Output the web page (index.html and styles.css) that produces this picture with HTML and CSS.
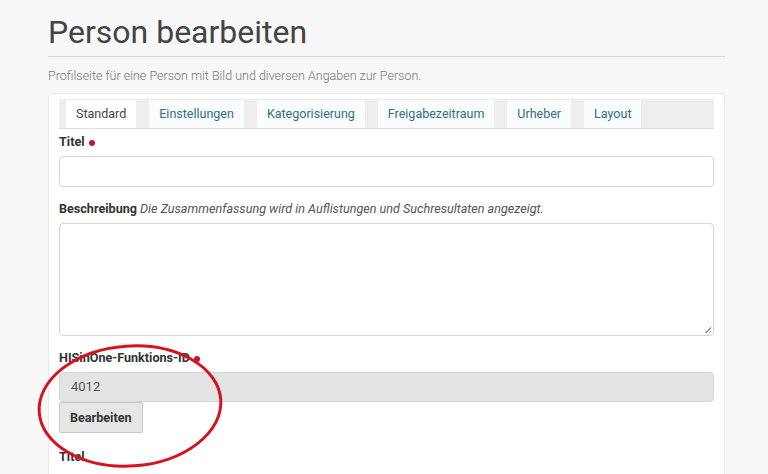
FILE: index.html
```html
<!DOCTYPE html>
<html lang="de">
<head>
<meta charset="utf-8">
<title>Person bearbeiten</title>
<link rel="stylesheet" href="styles.css">
</head>
<body>
<div class="page">
  <h1 class="title">Person bearbeiten</h1>
  <p class="lead">Profilseite für eine Person mit Bild und diversen Angaben zur Person.</p>
  <div class="card">
    <ul class="tabs">
      <li class="tab active">Standard</li>
      <li class="tab">Einstellungen</li>
      <li class="tab">Kategorisierung</li>
      <li class="tab">Freigabezeitraum</li>
      <li class="tab">Urheber</li>
      <li class="tab">Layout</li>
    </ul>
    <div class="field">
      <label class="label">Titel <span class="req"></span></label>
      <div class="input"></div>
    </div>
    <div class="field">
      <label class="label">Beschreibung <em class="hint">Die Zusammenfassung wird in Auflistungen und Suchresultaten angezeigt.</em></label>
      <div class="textarea"><span class="grip"></span></div>
    </div>
    <div class="field">
      <label class="label">HISinOne-Funktions-ID <span class="req"></span></label>
      <div class="input disabled">4012</div>
      <button class="btn">Bearbeiten</button>
    </div>
    <div class="field last">
      <label class="label">Titel</label>
    </div>
  </div>
</div>
<svg class="mark" width="768" height="474" viewBox="0 0 768 474">
  <ellipse cx="130" cy="406" rx="91" ry="60" fill="none" stroke="#d3141f" stroke-width="3" transform="rotate(-4 130 406)"/>
</svg>
</body>
</html>
```
FILE: styles.css
```css
* { box-sizing: border-box; }
html, body { margin: 0; padding: 0; }
body {
  background: #f8f8f8;
  font-family: Roboto, "Liberation Sans", Arial, sans-serif;
  color: #333;
  width: 768px;
  height: 474px;
  overflow: hidden;
  position: relative;
}
.page {
  margin-left: 48px;
  width: 677px;
  padding-top: 10px;
}
.title {
  margin: 0;
  font-size: 32px;
  font-weight: 400;
  color: #444;
  line-height: 44px;
  padding-bottom: 2px;
  border-bottom: 1px solid #dcdcdc;
}
.lead {
  margin: 10px 0 8px;
  font-size: 12.5px;
  font-weight: 300;
  color: #777;
  line-height: 18px;
}
.card {
  background: #fff;
  border: 1px solid #e8e8e8;
  border-radius: 4px;
  padding: 5px 10px 20px;
}
.tabs {
  list-style: none;
  margin: 0;
  padding: 1px 0 0 7px;
  background: #eeeeee;
  display: flex;
  gap: 13px;
  border-bottom: 1px solid #dedede;
}
.tab {
  background: #fbfcfd;
  color: #2f6f8a;
  font-size: 12.5px;
  line-height: 28px;
  padding: 0 10px;
}
.tab.active {
  background: #fff;
  color: #444;
}
.field { margin-top: 5px; }
.field + .field { margin-top: 14px; }
.field.last { margin-top: 16px; }
.label {
  display: block;
  font-size: 12.6px;
  font-weight: 700;
  color: #333;
  line-height: 16px;
  margin-bottom: 6px;
}
.hint {
  font-weight: 400;
  color: #555;
}
.req {
  display: inline-block;
  width: 6px;
  height: 6px;
  border-radius: 50%;
  background: #c3123a;
  vertical-align: middle;
  margin-left: 1px;
}
.input {
  height: 31px;
  border: 1px solid #d4d4d4;
  border-radius: 4px;
  background: #fff;
  font-size: 13px;
  color: #555;
  line-height: 29px;
  padding: 0 11px;
}
.input.disabled {
  background: #e4e4e4;
  height: 30px;
  line-height: 28px;
  border-color: #d6d6d6;
}
.textarea {
  height: 113px;
  border: 1px solid #d4d4d4;
  border-radius: 4px;
  background: #fff;
  position: relative;
}
.grip {
  position: absolute;
  right: 2px;
  bottom: 2px;
  width: 7px;
  height: 7px;
  background:
    linear-gradient(135deg, transparent 55%, #999 55%, #999 65%, transparent 65%, transparent 80%, #999 80%, #999 90%, transparent 90%);
}
.btn {
  display: block;
  font-family: inherit;
  font-size: 12.6px;
  font-weight: 700;
  color: #333;
  background: #e6e6e6;
  border: 1px solid #c8c8c8;
  border-radius: 2px;
  height: 31px;
  padding: 0 10px;
}
.mark {
  position: absolute;
  left: 0;
  top: 0;
  pointer-events: none;
}
```
